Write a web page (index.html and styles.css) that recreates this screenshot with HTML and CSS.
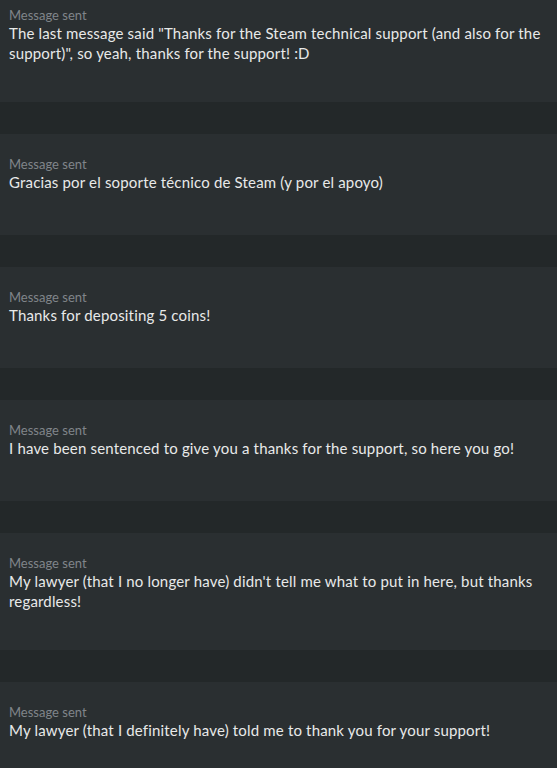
FILE: index.html
```html
<!DOCTYPE html>
<html>
<head>
<meta charset="utf-8">
<link rel="stylesheet" href="styles.css">
</head>
<body>
<div class="list">
  <div class="card">
    <div class="label">Message sent</div>
    <div class="msg">The last message said "Thanks for the Steam technical support (and also for the support)", so yeah, thanks for the support! :D</div>
  </div>
  <div class="card">
    <div class="label">Message sent</div>
    <div class="msg">Gracias por el soporte técnico de Steam (y por el apoyo)</div>
  </div>
  <div class="card">
    <div class="label">Message sent</div>
    <div class="msg">Thanks for depositing 5 coins!</div>
  </div>
  <div class="card">
    <div class="label">Message sent</div>
    <div class="msg">I have been sentenced to give you a thanks for the support, so here you go!</div>
  </div>
  <div class="card">
    <div class="label">Message sent</div>
    <div class="msg">My lawyer (that I no longer have) didn't tell me what to put in here, but thanks regardless!</div>
  </div>
  <div class="card">
    <div class="label">Message sent</div>
    <div class="msg">My lawyer (that I definitely have) told me to thank you for your support!</div>
  </div>
</div>
</body>
</html>
```
FILE: styles.css
```css
html, body {
  margin: 0;
  padding: 0;
  background: #232829;
  height: 100%;
  overflow: hidden;
}
.list {
  display: flex;
  flex-direction: column;
  gap: 32px;
  margin-top: -15px;
}
.card {
  box-sizing: border-box;
  min-height: 101px;
  background: #2a2f31;
  padding: 22px 9px 39px;
  display: flex;
  flex-direction: column;
  font-family: Lato, "Open Sans", sans-serif;
}
.label {
  font-size: 13px;
  line-height: 16px;
  color: #80858a;
}
.msg {
  font-size: 15px;
  line-height: 20px;
  letter-spacing: 0.17px;
  color: #e8e9e9;
}
```
